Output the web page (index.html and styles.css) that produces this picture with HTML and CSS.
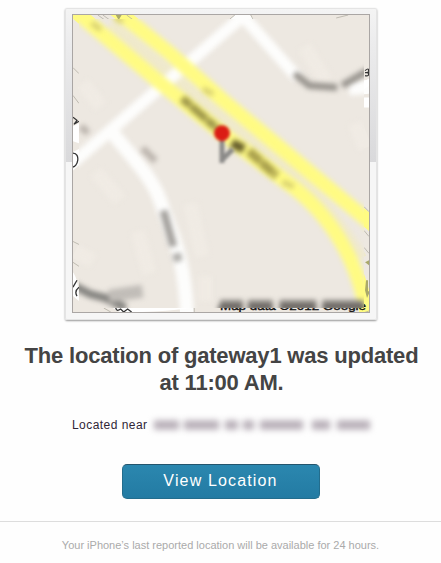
FILE: index.html
```html
<!DOCTYPE html>
<html lang="en">
<head>
<meta charset="utf-8">
<title>Location updated</title>
<link rel="stylesheet" href="styles.css">
</head>
<body>
<main class="message">
  <div class="frame">
    <svg class="map" viewBox="72 14 298 299" aria-label="Map">
      <defs>
        <clipPath id="inner"><rect x="78" y="18" width="287" height="291"/></clipPath>
        <filter id="soft" filterUnits="userSpaceOnUse" x="50" y="0" width="350" height="340" color-interpolation-filters="sRGB"><feGaussianBlur stdDeviation="2.6"/></filter>
        <filter id="smudge" filterUnits="userSpaceOnUse" x="50" y="0" width="350" height="340" color-interpolation-filters="sRGB"><feGaussianBlur stdDeviation="2.5"/></filter>
        <filter id="pin" filterUnits="userSpaceOnUse" x="200" y="110" width="50" height="70" color-interpolation-filters="sRGB"><feGaussianBlur stdDeviation="1.5"/></filter>
        <g id="roads" fill="none">
          <g stroke="#f0ebe4" stroke-width="14">
            <path d="M82 83l18 23M95 172l24 28M137 232l12 42M190 204l12 53M305 46l22 35M356 123l10 25M74 252l18 9M205 277v25"/>
          </g>
          <path d="M110 23L222 118L290 172Q333 208 362 259" stroke="#efe9cb" stroke-width="12"/>
          <path d="M68 166L243 15L298 77" stroke="#fdfdfc" stroke-width="12"/>
          <path d="M350 88L372 86M108 128C136 163 153 178 162 207C173 240 184 255 187 318" stroke="#fdfdfc" stroke-width="14"/>
          <path d="M74 10L157 80L222 133L288 183C330 213 362 263 369 324" stroke="#fffb83" stroke-width="14.5"/>
          <path d="M114 8L170 53L222 99L292 157L382 232" stroke="#fffb83" stroke-width="14.5"/>
        </g>
      </defs>
      <rect x="72" y="14" width="298" height="299" fill="#ede8e1"/>
      <use href="#roads"/>
      <g fill="none" stroke="#aaa79b" stroke-width=".7">
        <path d="M97 14l7 5M102 14l7 5M126 14l8 6M230 18l5-4M251 14l2 4M337 17l12-3M72 67l6 6M72 95l6 8M72 242l6 3M72 263l6 4M103 309l7 4M365 207l5 5M365 231l5 6M365 248l5 6M364 314l6-2M194 309v4"/>
      </g>
      <path d="M72 126l6-3v20l-6-2M72 152l6-3v12l-6 7M72 273q6 8 6 29l-6-5M112 309h80q-40 5-73 4M365 81l5-3v7l-5 4zM365 97h5v10h-5z" fill="#fff"/>
      <path d="M72 117l4 3-3 4 5-3M72 153c8 0 5 15-1 14M72 288l4-7M78 288q-5 4-2 9M115 309q1 4 5 1l3 3 4-3 4 3" fill="none" stroke="#333" stroke-width="1.3"/>
      <path d="M366 70q5-4 3 2 2 4-3 3M366 72h4" fill="none" stroke="#333" stroke-width="1.2"/>
      <path d="M115 14h6l-3 5zM366 263l4-2v5zM367 281h2v11h2l-3 7-2-8z" fill="#aaa969"/>
      <text class="map-credit" x="220" y="311" textLength="147" lengthAdjust="spacingAndGlyphs">Map data ©2012 Google</text>
      <g clip-path="url(#inner)">
        <rect x="78" y="18" width="287" height="291" fill="#ede8e1"/>
        <g filter="url(#soft)"><use href="#roads"/></g>
        <g filter="url(#smudge)" fill="none">
          <path d="M182 98L219 130" stroke="#9f974b" stroke-width="8" stroke-dasharray="11 1 20 1"/>
          <path d="M232 143l12 6" stroke="#665d2c" stroke-width="9"/>
          <path d="M249 151l28 25" stroke="#aaa04d" stroke-width="9" stroke-dasharray="16 1"/>
          <path d="M283 182l11 5M203 88l10 6M91 22l9 7M114 16l8 5" stroke="#d6ce72" stroke-width="5"/>
          <path d="M295 73l15 12 28 2" stroke="#99958f" stroke-width="7"/>
          <path d="M343 85l26-15" stroke="#99958f" stroke-width="7"/>
          <path d="M163 211l10 36" stroke="#a4a19d" stroke-width="8"/>
          <path d="M176 254l2 8" stroke="#b0aeaa" stroke-width="9"/>
          <path d="M142 148l13 13M80 126l7 7" stroke="#bcb5ae" stroke-width="7"/>
          <path d="M72 286l17 9 16 4 20 10" stroke="#858480" stroke-width="8"/>
          <path d="M108 297l34-5" stroke="#c1bdb8" stroke-width="13"/>
          <path d="M220 305H365" stroke="#85817c" stroke-width="8" stroke-dasharray="23 5 25 7 37 6 42 0"/>
          <path d="M218 309H367" stroke="#55524e" stroke-width="4" stroke-dasharray="25 5 25 7 37 6 44 0"/>
        </g>
        <g filter="url(#pin)">
          <path d="M222 139v24M222 160l11-11" stroke="#8b8a88" stroke-width="5"/>
          <circle cx="222" cy="133" r="8" fill="#db1c15"/>
        </g>
      </g>
    </svg>
  </div>
  <h1 class="title">The location of gateway1 was updated<br>at 11:00 AM.</h1>
  <p class="near"><span class="near-label">Located near</span>
    <svg class="redacted" viewBox="0 0 220 20" aria-label="Address hidden">
      <path d="M2 10h25M32 10h35M73 10h13M91 10h11M108 10h43M160 10h18M185 10h33"/>
    </svg>
  </p>
  <a class="button" href="#"><span>View Location</span></a>
  <footer class="note"><span>Your iPhone’s last reported location will be available for 24 hours.</span></footer>
</main>
</body>
</html>
```
FILE: styles.css
```css
* { box-sizing: border-box; }
body {
  margin: 0;
  background: #fefefe;
  font-family: "Liberation Sans", Arial, sans-serif;
}
.message {
  height: 563px;
  padding-top: 8px;
  display: flex;
  flex-direction: column;
  align-items: center;
  overflow: hidden;
}
.frame {
  width: 312px;
  height: 312px;
  padding: 6px 7px;
  flex: none;
  background: linear-gradient(#f4f4f4, #ececed 35px, #d9d9db 154px, #f6f6f6 154px);
  border-radius: 2px;
  box-shadow: inset 0 0 0 1px #e4e4e4, 0 1px 2px #999;
}
.map {
  display: block;
  width: 298px;
  height: 299px;
  border: 1px solid #aaa6a4;
}
.map-credit { font: 11.5px "Liberation Sans", Arial, sans-serif; fill: #111; stroke: #111; stroke-width: .4px; }
.title {
  margin: 22px 0 0;
  padding-left: 2px;
  font-size: 22px;
  line-height: 27px;
  letter-spacing: -.2px;
  color: #444;
  text-align: center;
  white-space: nowrap;
}
.near {
  display: flex;
  align-items: center;
  width: 299px;
  height: 20px;
  margin: 19px 0 0;
  padding-left: 1px;
  font-size: 12px;
  color: #302536;
  white-space: nowrap;
}
.near-label { width: 75px; letter-spacing: .45px; }
.redacted { width: 220px; height: 20px; margin-left: 5px; overflow: visible; filter: blur(3px); }
.redacted path { fill: none; stroke: #a89ea8; stroke-width: 9; stroke-opacity: .85; }
.button {
  display: flex;
  align-items: center;
  justify-content: center;
  width: 198px;
  height: 35px;
  margin-top: 29px;
  border: 1px solid #236d8d;
  border-top-color: #24556d;
  border-radius: 5px;
  background: linear-gradient(#2b87af, #237ba3);
  color: #fff;
  font-size: 16px;
  line-height: 18px;
  letter-spacing: 1.15px;
  text-decoration: none;
}
.button span { padding-bottom: 2px; }
.note {
  width: 100%;
  margin-top: 22px;
  padding-top: 16px;
  border-top: 1px solid #ddd;
  text-align: center;
  font-size: 11px;
  line-height: 14px;
  color: #aaa;
}
```
